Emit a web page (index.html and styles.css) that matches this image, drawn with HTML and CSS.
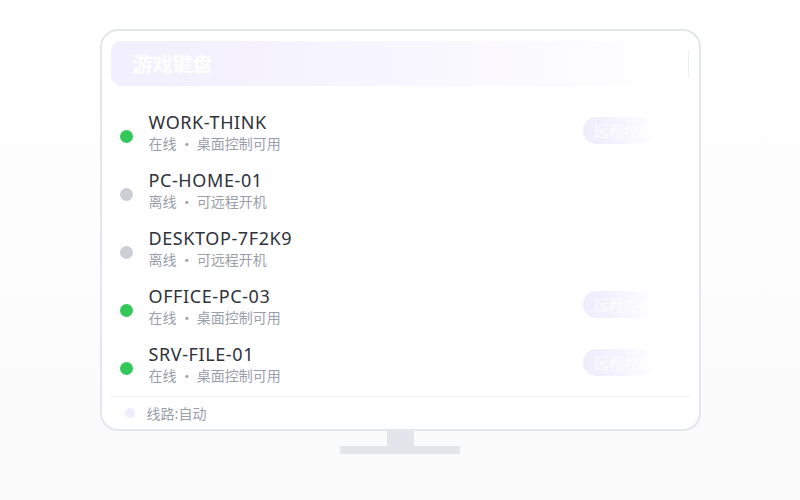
FILE: index.html
```html
<!DOCTYPE html>
<html lang="zh">
<head>
<meta charset="utf-8">
<title>游戏键盘</title>
<link rel="stylesheet" href="styles.css">
</head>
<body>
<div class="stage">
  <div class="monitor">
    <div class="header">
      <span class="title">游戏键盘</span>
      <span class="header-edge"></span>
    </div>
    <ul class="list">
      <li class="row">
        <span class="dot on"></span>
        <div class="info">
          <div class="name">WORK-THINK</div>
          <div class="sub">在线 · 桌面控制可用</div>
        </div>
        <span class="btn">远程控制</span>
      </li>
      <li class="row">
        <span class="dot off"></span>
        <div class="info">
          <div class="name">PC-HOME-01</div>
          <div class="sub">离线 · 可远程开机</div>
        </div>
      </li>
      <li class="row">
        <span class="dot off"></span>
        <div class="info">
          <div class="name">DESKTOP-7F2K9</div>
          <div class="sub">离线 · 可远程开机</div>
        </div>
      </li>
      <li class="row">
        <span class="dot on"></span>
        <div class="info">
          <div class="name">OFFICE-PC-03</div>
          <div class="sub">在线 · 桌面控制可用</div>
        </div>
        <span class="btn">远程控制</span>
      </li>
      <li class="row">
        <span class="dot on"></span>
        <div class="info">
          <div class="name">SRV-FILE-01</div>
          <div class="sub">在线 · 桌面控制可用</div>
        </div>
        <span class="btn">远程控制</span>
      </li>
    </ul>
    <div class="footer">
      <span class="fdot"></span>
      <span class="ftext">线路:自动</span>
    </div>
  </div>
  <div class="neck"></div>
  <div class="base"></div>
</div>
</body>
</html>
```
FILE: styles.css
```css
* { box-sizing: border-box; }
html, body { margin: 0; padding: 0; }
body {
  width: 800px;
  height: 500px;
  background: linear-gradient(180deg, #ffffff 0%, #fdfdfd 40%, #fafafb 100%);
  font-family: "Noto Sans", "Noto Sans CJK SC", sans-serif;
  overflow: hidden;
}
.stage {
  display: flex;
  flex-direction: column;
  align-items: center;
  padding-top: 29px;
}
.monitor {
  width: 601px;
  height: 402px;
  border: 2px solid #e3e6ea;
  border-radius: 18px;
  background: #ffffff;
  padding: 10px 9px 0 9px;
  display: flex;
  flex-direction: column;
}
.header {
  height: 45px;
  border-radius: 10px;
  background: linear-gradient(90deg, #f2effe 0%, #f7f5fe 45%, #fdfcff 85%, #ffffff 100%);
  display: flex;
  align-items: center;
  padding-left: 22px;
  position: relative;
}
.title {
  color: #ffffff;
  font-family: "Noto Sans CJK SC", sans-serif;
  font-weight: 700;
  font-size: 20px;
  line-height: 1;
}
.header-edge {
  position: absolute;
  right: 1px;
  top: 10px;
  width: 1px;
  height: 26px;
  background: #eceef2;
}
.list {
  list-style: none;
  margin: 17px 0 0 0;
  padding: 0;
}
.row {
  height: 58px;
  display: flex;
  align-items: center;
  padding: 0 0 0 9px;
}
.dot {
  width: 13px;
  height: 13px;
  border-radius: 50%;
  flex: none;
  margin-top: 8px;
}
.dot.on { background: #34c759; }
.dot.off { background: #cbced5; }
.info {
  margin-left: 16px;
  display: flex;
  flex-direction: column;
}
.name {
  font-size: 18px;
  line-height: 22px;
  color: #2e323a;
  letter-spacing: 0.6px;
}
.sub {
  font-family: "Noto Sans CJK SC", sans-serif;
  font-size: 14px;
  line-height: 20px;
  color: #9aa0aa;
}
.btn {
  margin-left: auto;
  margin-right: 35px;
  margin-top: -4px;
  width: 72px;
  height: 27px;
  border-radius: 14px;
  background: linear-gradient(90deg, #efecfd 0%, #f4f2fe 45%, rgba(255,255,255,0) 100%);
  color: #ffffff;
  font-family: "Noto Serif CJK SC", "Liberation Serif", serif;
  font-size: 15px;
  line-height: 27px;
  padding-left: 11px;
  white-space: nowrap;
  overflow: hidden;
}
.footer {
  margin-top: 3px;
  border-top: 1px solid #eef0f3;
  height: 33px;
  display: flex;
  align-items: center;
  padding-left: 14px;
}
.fdot {
  width: 10px;
  height: 10px;
  border-radius: 50%;
  background: #efecfd;
}
.ftext {
  margin-left: 12px;
  font-family: "Noto Sans CJK SC", sans-serif;
  font-size: 14px;
  color: #9aa0aa;
}
.neck {
  width: 27px;
  height: 15px;
  background: #e2e5ea;
}
.base {
  width: 120px;
  height: 8px;
  background: #e2e5ea;
}
```
